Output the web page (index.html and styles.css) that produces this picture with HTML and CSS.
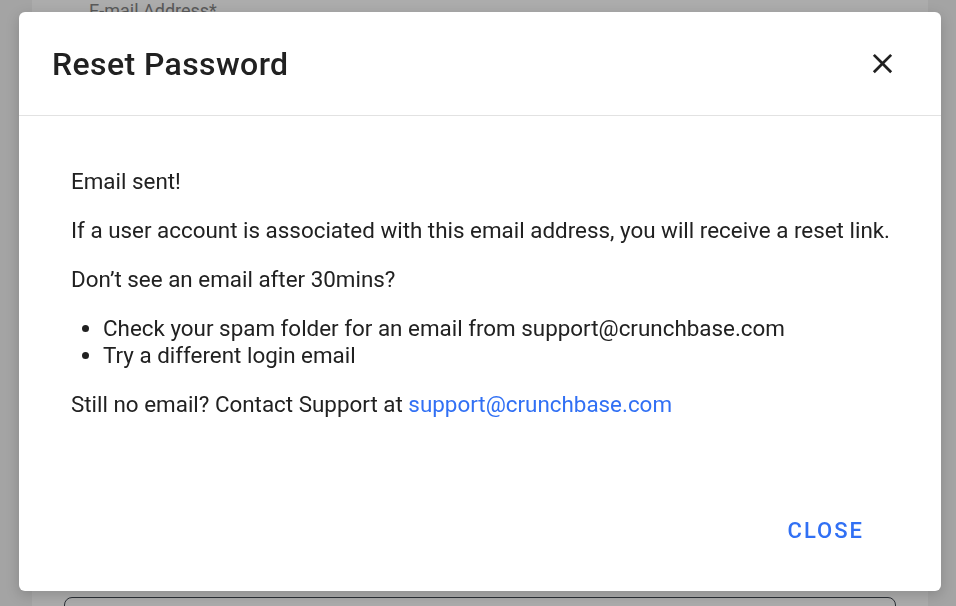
FILE: index.html
```html
<!DOCTYPE html>
<html lang="en">

<head>
  <meta charset="UTF-8">
  <meta name="viewport" content="width=device-width, initial-scale=1">
  <title>Reset Password | Crunchbase</title>
  <link rel="stylesheet" href="styles.css">
</head>

<body>

  <div class="page">
    <div class="login-card">
      <label class="field-label">E-mail Address*</label>
      <div class="field-input"></div>
    </div>
  </div>

  <div class="modal">
    <div class="modal-header">
      <h2>Reset Password</h2>
      <button class="btn-close-icon" aria-label="Close">
        <svg width="33" height="33" viewBox="0 0 24 24">
          <path d="M19 6.41 17.59 5 12 10.59 6.41 5 5 6.41 10.59 12 5 17.59 6.41 19 12 13.41 17.59 19 19 17.59 13.41 12z" fill="#212121"/>
        </svg>
      </button>
    </div>

    <div class="modal-body">
      <p>Email sent!</p>
      <p>If a user account is associated with this email address, you will receive a reset link.</p>
      <p>Don’t see an email after 30mins?</p>
      <ul>
        <li>Check your spam folder for an email from support@crunchbase.com</li>
        <li>Try a different login email</li>
      </ul>
      <p>Still no email? Contact Support at <a href="mailto:support@crunchbase.com">support@crunchbase.com</a></p>
    </div>

    <div class="modal-actions">
      <button class="btn-text">Close</button>
    </div>
  </div>

</body>

</html>
```

FILE: styles.css
```css
body {
  font-family: Roboto, 'Liberation Sans', sans-serif;
  background-color: #a4a4a4;
  margin: 0;
  color: #212121;
  height: 606px;
  overflow: hidden;
}

.page {
  margin: 0 28px 0 32px;
  height: 606px;
  overflow: hidden;
  background-color: #acacac;
}

.login-card {
  display: flex;
  flex-direction: column;
  padding: 0 32px;
}

.field-label {
  font-size: 18px;
  color: #5a5a5a;
  margin-top: 0;
  padding-left: 25px;
}

.field-input {
  margin-top: 576px;
  height: 48px;
  border: 1px solid #2b2f36;
  border-radius: 8px;
}

/* dialog */
.modal {
  position: fixed;
  left: 19px;
  top: 12px;
  width: 922px;
  height: 579px;
  background: white;
  border-radius: 6px;
  box-shadow: 0 4px 14px rgba(0, 0, 0, 0.18);
  display: flex;
  flex-direction: column;
}

.modal-header {
  height: 103px;
  display: flex;
  align-items: center;
  justify-content: space-between;
  padding: 0 35px 0 33px;
  border-bottom: 1px solid #e2e2e2;
}

.modal-header h2 {
  margin: 0;
  font-size: 32px;
  font-weight: 500;
  letter-spacing: 0.4px;
  color: #212121;
}

.btn-close-icon {
  width: 48px;
  height: 48px;
  border: none;
  background: none;
  padding: 0;
  display: flex;
  align-items: center;
  justify-content: center;
  cursor: pointer;
}

.modal-body {
  flex: 1;
  padding: 52px 30px 0 52px;
  font-size: 22.4px;
  line-height: 27px;
  display: flex;
  flex-direction: column;
  gap: 22px;
}

.modal-body p,
.modal-body ul {
  margin: 0;
}

.modal-body ul {
  padding-left: 32px;
}

.modal-body a {
  color: #3170f4;
  text-decoration: none;
}

.modal-actions {
  display: flex;
  justify-content: flex-end;
  padding: 0 77px 40px 0;
}

.btn-text {
  font-family: Roboto, 'Liberation Sans', sans-serif;
  font-size: 22px;
  font-weight: 500;
  letter-spacing: 2px;
  text-transform: uppercase;
  color: #3170f4;
  background: none;
  border: none;
  padding: 8px 0;
  cursor: pointer;
}
```
